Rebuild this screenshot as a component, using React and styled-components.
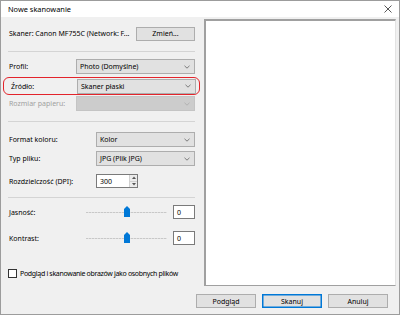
import React from 'react'
import styled, { createGlobalStyle } from 'styled-components'

const GlobalStyle = createGlobalStyle`
    html, body {
        margin: 0;
        padding: 0;
        background: #ffffff;
    }
    body {
        font-family: "Noto Sans", "Liberation Sans", sans-serif;
        font-size: 7px;
        color: #000;
    }
`;

const Window = styled.div`
    width: 400px;
    height: 315px;
    box-sizing: border-box;
    border: 1px solid #9c9c9c;
    display: flex;
    flex-direction: column;
    background: #f0f0f0;
`;

const TitleBar = styled.div`
    height: 16px;
    flex: none;
    background: #fff;
    display: flex;
    align-items: center;
    justify-content: space-between;
    padding: 0 6px 0 7px;
    font-size: 7.4px;
`;

const CloseBtn = styled.div`
    width: 10px;
    height: 10px;
    display: flex;
    align-items: center;
    justify-content: center;
`;

const Body = styled.div`
    flex: 1;
    display: flex;
    flex-direction: column;
    padding: 2px 2px 6px 7px;
`;

const Main = styled.div`
    flex: 1;
    display: flex;
    gap: 9px;
`;

const LeftPanel = styled.div`
    width: 187px;
    display: flex;
    flex-direction: column;
`;

const Row = styled.div`
    display: flex;
    align-items: center;
    justify-content: space-between;
    height: ${({$h}) => $h || 15}px;
    margin-top: ${({$mt}) => $mt || 0}px;
    padding-left: 1px;
`;

const Label = styled.span`
    color: ${({$disabled}) => ($disabled ? '#a0a0a0' : '#000')};
    white-space: nowrap;
    letter-spacing: ${({$tight}) => ($tight ? '-0.32px' : 'normal')};
`;

const Separator = styled.div`
    height: 1px;
    background: #d4d4d4;
    margin-top: ${({$mt}) => $mt}px;
    flex: none;
`;

const Highlight = styled.div`
    margin: 3px -5px 0 -5px;
    padding: 1px 3px 1px 6px;
    border: 1.3px solid #e3242b;
    border-radius: 6px;
`;

const SelectBox = styled.div`
    width: ${({$w}) => $w}px;
    height: 15px;
    box-sizing: border-box;
    border: 1px solid ${({$disabled}) => ($disabled ? '#c4c4c4' : '#adadad')};
    background: ${({$disabled}) => ($disabled ? '#cccccc' : '#e1e1e1')};
    display: flex;
    align-items: center;
    justify-content: space-between;
    padding: 0 4px 0 3px;
    color: #000;
`;

const Button = styled.div`
    width: ${({$w}) => $w || 60}px;
    height: 14px;
    box-sizing: border-box;
    border: 1px solid ${({$primary}) => ($primary ? '#0078d7' : '#adadad')};
    box-shadow: ${({$primary}) => ($primary ? 'inset 0 0 0 0.5px #0078d7' : 'none')};
    background: #e1e1e1;
    display: flex;
    align-items: center;
    justify-content: center;
`;

const NumberBox = styled.div`
    width: ${({$w}) => $w}px;
    height: 14px;
    box-sizing: border-box;
    border: 1px solid #7a7a7a;
    background: #fff;
    display: flex;
    align-items: center;
    justify-content: space-between;
    padding-left: 3px;
`;

const Spinner = styled.div`
    width: 7px;
    height: 100%;
    display: flex;
    flex-direction: column;
    border-left: 1px solid #d0d0d0;
`;

const SpinHalf = styled.div`
    flex: 1;
    background: #ececec;
    display: flex;
    align-items: center;
    justify-content: center;
    border-top: ${({$bottom}) => ($bottom ? '1px solid #d0d0d0' : 'none')};
`;

const SliderRow = styled.div`
    display: flex;
    align-items: center;
    gap: 6px;
`;

const Track = styled.div`
    position: relative;
    width: 81px;
    height: 12px;
`;

const TrackLine = styled.div`
    position: absolute;
    left: 0;
    right: 0;
    top: 6px;
    height: 1px;
    background: repeating-linear-gradient(90deg, #c8c8c8 0 2px, #e0e0e0 2px 3px);
`;

const Thumb = styled.svg`
    position: absolute;
    left: 38px;
    top: 0;
`;

const CheckRow = styled.div`
    display: flex;
    align-items: center;
    gap: 3px;
    margin-top: ${({$mt}) => $mt}px;
`;

const CheckBox = styled.div`
    width: 9px;
    height: 9px;
    box-sizing: border-box;
    border: 1px solid #333;
    background: #fff;
`;

const Preview = styled.div`
    flex: 1;
    margin-right: 1px;
    background: #fff;
    border-top: 2px solid #a0a0a0;
    border-left: 2px solid #a0a0a0;
    border-right: 1px solid #e3e3e3;
    border-bottom: 1px solid #a0a0a0;
`;

const Footer = styled.div`
    display: flex;
    justify-content: flex-end;
    gap: 6px;
    padding-right: 9px;
    margin-top: 8px;
`;

const Chevron = ({ disabled }) => (
    <svg width="6" height="4" viewBox="0 0 6 4">
        <path d="M0.5 0.8 L3 3.2 L5.5 0.8" fill="none" stroke={disabled ? '#aaa' : '#606060'} strokeWidth="0.8" />
    </svg>
)

const Select = ({ w, value, disabled }) => (
    <SelectBox $w={w} $disabled={disabled}>
        <span>{value}</span>
        <Chevron disabled={disabled} />
    </SelectBox>
)

const Slider = () => (
    <Track>
        <TrackLine />
        <Thumb width="6" height="11" viewBox="0 0 6 11">
            <path d="M0 3 L3 0 L6 3 L6 11 L0 11 Z" fill="#0078d7" />
        </Thumb>
    </Track>
)

const App = () => {
    return (
        <>
            <GlobalStyle />
            <Window>
                <TitleBar>
                    <span>Nowe skanowanie</span>
                    <CloseBtn>
                        <svg width="8" height="8" viewBox="0 0 8 8">
                            <path d="M0.5 0.5 L7.5 7.5 M7.5 0.5 L0.5 7.5" stroke="#444" strokeWidth="0.9" />
                        </svg>
                    </CloseBtn>
                </TitleBar>
                <Body>
                    <Main>
                        <LeftPanel>
                            <Row $mt={7}>
                                <Label>Skaner: Canon MF755C (Network: F...</Label>
                                <Button $w={59}>Zmień...</Button>
                            </Row>
                            <Separator $mt={10} />
                            <Row $mt={7}>
                                <Label>Profil:</Label>
                                <Select w={119} value="Photo (Domyślne)" />
                            </Row>
                            <Highlight>
                                <Row $h={14}>
                                    <Label>Źródło:</Label>
                                    <Select w={119} value="Skaner płaski" />
                                </Row>
                            </Highlight>
                            <Row $mt={1}>
                                <Label $disabled>Rozmiar papieru:</Label>
                                <Select w={119} value="" disabled />
                            </Row>
                            <Separator $mt={10} />
                            <Row $mt={10}>
                                <Label>Format koloru:</Label>
                                <Select w={99} value="Kolor" />
                            </Row>
                            <Row $mt={4}>
                                <Label>Typ pliku:</Label>
                                <Select w={99} value="JPG (Plik JPG)" />
                            </Row>
                            <Row $mt={8} $h={14}>
                                <Label>Rozdzielczość (DPI):</Label>
                                <div style={{ width: 99 }}>
                                    <NumberBox $w={42}>
                                        <span>300</span>
                                        <Spinner>
                                            <SpinHalf>
                                                <svg width="4" height="3" viewBox="0 0 4 3"><path d="M0 3 L2 0.5 L4 3 Z" fill="#555" /></svg>
                                            </SpinHalf>
                                            <SpinHalf $bottom>
                                                <svg width="4" height="3" viewBox="0 0 4 3"><path d="M0 0 L2 2.5 L4 0 Z" fill="#555" /></svg>
                                            </SpinHalf>
                                        </Spinner>
                                    </NumberBox>
                                </div>
                            </Row>
                            <Separator $mt={9} />
                            <Row $mt={7} $h={14}>
                                <Label>Jasność:</Label>
                                <SliderRow>
                                    <Slider />
                                    <NumberBox $w={22}>0</NumberBox>
                                </SliderRow>
                            </Row>
                            <Row $mt={12} $h={14}>
                                <Label>Kontrast:</Label>
                                <SliderRow>
                                    <Slider />
                                    <NumberBox $w={22}>0</NumberBox>
                                </SliderRow>
                            </Row>
                            <CheckRow $mt={24}>
                                <CheckBox />
                                <Label $tight>Podgląd i skanowanie obrazów jako osobnych plików</Label>
                            </CheckRow>
                        </LeftPanel>
                        <Preview />
                    </Main>
                    <Footer>
                        <Button>Podgląd</Button>
                        <Button $primary>Skanuj</Button>
                        <Button>Anuluj</Button>
                    </Footer>
                </Body>
            </Window>
        </>
    )
}

export default App
